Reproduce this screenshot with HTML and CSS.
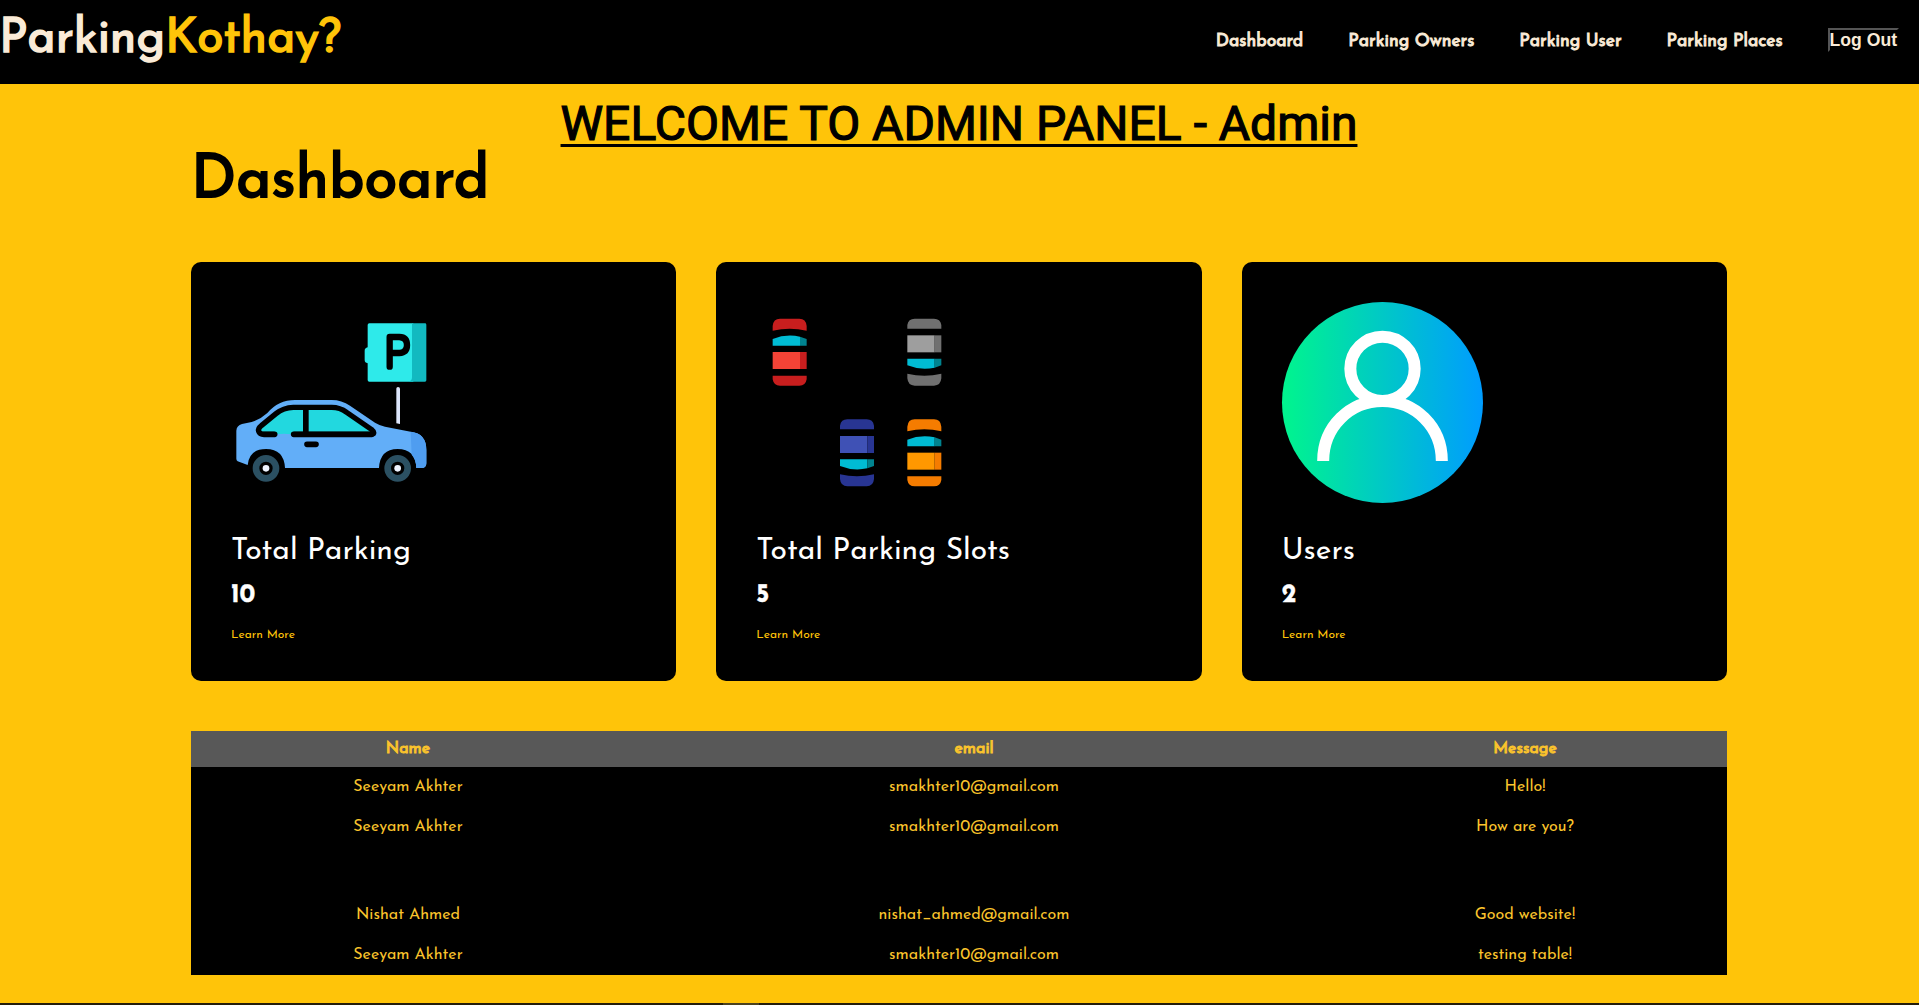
FILE: index.html
```html
<!DOCTYPE html>
<html lang="en">
<head>
<meta charset="utf-8">
<title>ParkingKothay? Admin</title>
<link rel="stylesheet" href="styles.css">
</head>
<body>
<header class="navbar">
  <a class="logo">Parking<span class="logo-accent">Kothay?</span></a>
  <nav class="menu">
    <a class="menu-link">Dashboard</a>
    <a class="menu-link">Parking Owners</a>
    <a class="menu-link">Parking User</a>
    <a class="menu-link">Parking Places</a>
    <button class="logout">Log Out</button>
  </nav>
</header>
<main class="content">
  <h1 class="welcome">WELCOME TO ADMIN PANEL - Admin</h1>
  <h2 class="heading">Dashboard</h2>
  <section class="cards">
    <article class="card">
      <svg class="card-icon" viewBox="153 156 600 600">
        <path fill="#2eeaea" d="M568 220H700V395H568Q563 395 563 390V340Q554 338 554 330V302Q554 294 563 292V225Q563 220 568 220Z"/>
        <path fill="#12b9c0" d="M696 220H735Q739 220 739 224V391Q739 395 735 395H685Q696 393 696 382Z"/>
        <path fill="none" stroke="#000" stroke-width="19" stroke-linecap="round" stroke-linejoin="round" d="M629 350V261H658Q681 262 681 285Q681 308 658 309H629"/>
        <path fill="#dce6fb" d="M649 416Q649 411 654 411Q660 411 660 416V522L649 520Z"/>
        <path fill="#62aef8" d="M169 542Q170 527 186 522L215 516Q240 509 262 489Q295 450 345 450H455Q485 450 510 467L585 518Q600 527 615 530L692 545Q739 550 739 600V640Q739 654 725 654H709Q707 597 653 597Q600 597 597 654H315Q312 597 258 597Q208 597 203 645L173 634Q169 631 169 626Z"/>
        <path fill="#4f9df0" d="M692 545Q739 550 739 600V640Q739 654 725 654H709Q708 628 695 614Z"/>
        <path fill="#22d8df" stroke="#000" stroke-width="16" stroke-linejoin="round" d="M284 553H252C234 553 230 537 244 527L288 491Q310 473 340 472H455Q480 472 500 487L574 538Q588 550 575 553H340"/>
        <path fill="#22d8df" d="M284 540H340V552H284Z"/>
        <path fill="#62aef8" d="M292 553Q312 549 332 553V563H292Z"/>
        <path fill="none" stroke="#000" stroke-width="17" stroke-linecap="round" d="M377.500 475V550M252 553H284M341 553H575M381 583H408"/>
        <circle cx="258" cy="655" r="30" fill="none" stroke="#2b5062" stroke-width="20"/>
        <circle cx="653" cy="655" r="30" fill="none" stroke="#2b5062" stroke-width="20"/>
        <circle cx="258" cy="655" r="10" fill="#eef4ff"/>
        <circle cx="653" cy="655" r="10" fill="#eef4ff"/>
      </svg>
      <h3 class="card-title">Total Parking</h3>
      <p class="card-count">10</p>
      <a class="card-link">Learn More</a>
    </article>
    <article class="card">
      <svg class="card-icon" viewBox="168 156 600 600">
        <defs>
          <g id="car">
            <path fill="var(--dark)" d="M0 36V22Q2 0 22 0H80Q100 0 102 22V36Q51 24 0 36ZM0 171H102V182Q99 201 80 201H22Q3 201 0 182Z"/>
            <path fill="#00bcd4" d="M0 61Q40 45 82 54V81H0Z"/>
            <path fill="#00838f" d="M82 54L102 61V81H82Z"/>
            <path fill="var(--light)" d="M0 100H82V151H0Z"/>
            <path fill="var(--dark)" d="M82 100H102V151H82Z"/>
          </g>
        </defs>
        <g class="car-red"><use href="#car" x="218" y="206"/></g>
        <g class="car-gray" transform="translate(622 407) scale(1 -1)"><use href="#car"/></g>
        <g class="car-blue" transform="translate(420 709) scale(1 -1)"><use href="#car"/></g>
        <g class="car-orange"><use href="#car" x="622" y="508"/></g>
      </svg>
      <h3 class="card-title">Total Parking Slots</h3>
      <p class="card-count">5</p>
      <a class="card-link">Learn More</a>
    </article>
    <article class="card">
      <svg class="card-icon" viewBox="156 156 600 600">
        <defs>
          <linearGradient id="user-fill">
            <stop offset="0" stop-color="#00f58d"/>
            <stop offset="1" stop-color="#009cff"/>
          </linearGradient>
        </defs>
        <circle cx="457.500" cy="457.500" r="301.500" fill="url(#user-fill)"/>
        <g fill="none" stroke="#fff" stroke-width="36">
          <circle cx="457.500" cy="356.500" r="96.500"/>
          <path d="M279.500 633C279.500 530 360 453 457.500 453S635.500 530 635.500 633"/>
        </g>
      </svg>
      <h3 class="card-title">Users</h3>
      <p class="card-count">2</p>
      <a class="card-link">Learn More</a>
    </article>
  </section>
  <table class="messages">
    <colgroup><col class="col-name"><col class="col-email"><col class="col-message"></colgroup>
    <thead>
      <tr><th>Name</th><th>email</th><th>Message</th></tr>
    </thead>
    <tbody>
      <tr><td>Seeyam Akhter</td><td>smakhter10@gmail.com</td><td>Hello!</td></tr>
      <tr><td>Seeyam Akhter</td><td>smakhter10@gmail.com</td><td>How are you?</td></tr>
      <tr class="blank-row"><td></td><td></td><td></td></tr>
      <tr><td>Nishat Ahmed</td><td>nishat_ahmed@gmail.com</td><td>Good website!</td></tr>
      <tr><td>Seeyam Akhter</td><td>smakhter10@gmail.com</td><td>testing table!</td></tr>
    </tbody>
  </table>
</main>
<footer class="footer"><span class="footer-mark"></span></footer>
</body>
</html>
```
FILE: styles.css
```css
* { box-sizing: border-box; margin: 0; padding: 0; }

body {
  height: 1005px;
  display: flex;
  flex-direction: column;
  overflow: hidden;
  background: #ffc409;
  font-family: "Josefin Sans", Lato, sans-serif;
}

/* Regular cut thickened with an outline, keeping the regular advance widths */
.logo, .menu-link, .welcome, .heading, .messages th {
  font-weight: 400;
  -webkit-text-stroke: 0.031em currentColor;
}

.navbar {
  display: flex;
  justify-content: space-between;
  height: 84px;
  padding: 8px 20px 0 0;
  background: #000;
}
.logo { margin-left: -1px; color: #faebd7; font-size: 48px; line-height: 64px; }
.logo-accent { color: #ffc409; }
.menu { display: flex; align-items: flex-start; gap: 45px; padding-top: 21px; }
.menu-link { color: #faebd7; font-size: 17.6px; line-height: 25px; -webkit-text-stroke-width: 0.9px; }
.logout {
  height: 24px;
  margin-top: -1px;
  border: 2px solid;
  border-color: #555 #000 #000 #555;
  background: #000;
  color: #faebd7;
  font: 700 17.6px/18px "Liberation Sans", Arial, sans-serif;
}

.content { flex: 1; width: 1536px; margin-left: 191px; }
.welcome {
  padding: 12px 0 1px;
  color: #000;
  font-family: Roboto, sans-serif;
  font-size: 48px;
  line-height: 56px;
  text-align: center;
  text-decoration: underline;
  text-decoration-thickness: 3px;
  text-decoration-skip-ink: none;
  text-underline-offset: 4px;
  -webkit-text-stroke-width: 1.2px;
}
.heading { font-size: 60px; line-height: 58px; }

.cards { display: grid; grid-template-columns: repeat(3, 1fr); gap: 40px; margin-top: 51px; }
.card { height: 419px; padding: 40px; border-radius: 10px; background: #000; color: #fff; }
.card-icon { display: block; width: 200px; height: 200px; overflow: visible; }
.card-title { margin-top: 30px; font-size: 30px; font-weight: 400; line-height: 40px; }
.card-count { margin-top: 4px; font-size: 25px; font-weight: 700; line-height: 40px; -webkit-text-stroke: 0.4px currentColor; }
.card-link { display: inline-block; margin-top: 9px; color: #ffc409; font-size: 12px; line-height: 20px; }

.car-red { --light: #f44336; --dark: #c81e1e; }
.car-gray { --light: #9e9e9e; --dark: #707070; }
.car-blue { --light: #3f51b5; --dark: #283593; }
.car-orange { --light: #ff9800; --dark: #f57c00; }

.messages {
  width: 100%;
  margin-top: 50px;
  border-collapse: collapse;
  table-layout: fixed;
  background: #000;
  color: #fbc42c;
  font-size: 16px;
  text-align: center;
}
.col-name { width: 434px; }
.col-email { width: 698px; }
.messages thead { background: #585858; }
.messages th { height: 36px; -webkit-text-stroke-width: 0.9px; }
.messages td { height: 40px; }
.messages .blank-row td { height: 48px; }

.footer { height: 2px; background: #241d0b; }
.footer-mark { display: block; width: 36px; height: 2px; margin-left: 723px; background: #4b421f; }
```
